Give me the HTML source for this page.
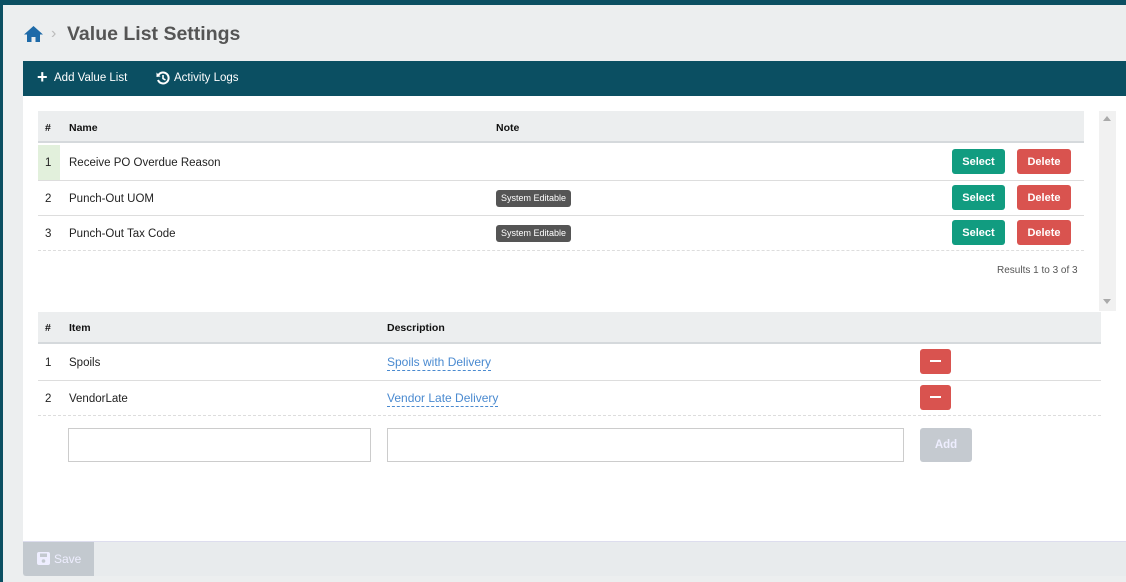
<!DOCTYPE html>
<html><head><style>
*{box-sizing:border-box;margin:0;padding:0}
body{width:1126px;height:582px;background:#eceeef;font-family:"Liberation Sans",sans-serif;position:relative;overflow:hidden;color:#222;font-size:12px}
.a{position:absolute}
.btn{position:absolute;border-radius:3px;color:#fff;font-weight:bold;font-size:11px;text-align:center;line-height:26px}
.sel{background:#119c80;width:53px;height:25px;left:952px}
.del{background:#d9534f;width:54px;height:25px;left:1017px}
.tag{position:absolute;left:496px;background:#555;color:#fff;font-size:9px;border-radius:3px;padding:0 5px;line-height:17px;height:17px}
.hd{font-weight:bold;font-size:10.5px;color:#111}
.link{color:#4a8ad0;border-bottom:1px dashed #4a8ad0;font-size:12px;line-height:15px}
.txt{font-size:11.5px;margin-top:2px}
</style></head><body>
<div class="a" style="left:0;top:0;width:1126px;height:5px;background:#0b4f62"></div>
<div class="a" style="left:0;top:0;width:3px;height:582px;background:#0b4f62"></div>
<svg class="a" style="left:23px;top:25px" width="21" height="18" viewBox="0 0 21 18"><path d="M10.5 1 L1 9.5 H4 V17 H8.5 V12 H12.5 V17 H17 V9.5 H20 Z" fill="#1e6aa8"/></svg>
<div class="a" style="left:51px;top:25px;color:#bbb;font-size:16px">›</div>
<div class="a" style="left:67px;top:23px;font-size:19.5px;font-weight:bold;color:#555">Value List Settings</div>
<div class="a" style="left:23px;top:61px;width:1103px;height:35px;background:#0b4f62;color:#fff;font-size:11.5px">
<span class="a" style="left:14px;top:7px;font-size:18px;font-weight:bold;line-height:18px">+</span>
<span class="a" style="left:31px;top:11px">Add Value List</span>
<svg class="a" style="left:133px;top:10px" width="14" height="14" viewBox="0 0 14 14"><path d="M2.5 4 A5.5 5.5 0 1 1 2 9" stroke="#fff" stroke-width="2" fill="none"/><path d="M0.5 1.5 L4.5 5.5 L0.5 6 Z" fill="#fff"/><path d="M7 4 V7.5 L9.5 9" stroke="#fff" stroke-width="1.6" fill="none"/></svg>
<span class="a" style="left:151px;top:11px">Activity Logs</span>
</div>
<div class="a" style="left:23px;top:96px;width:1103px;height:445px;background:#fff"></div>
<div class="a" style="left:38px;top:111px;width:1046px;height:32px;background:#eceeef;border-bottom:2px solid #d5d9dc"></div>
<div class="a hd" style="left:45px;top:122px">#</div>
<div class="a hd" style="left:69px;top:122px">Name</div>
<div class="a hd" style="left:496px;top:122px">Note</div>
<div class="a" style="left:38px;top:145px;width:22px;height:35px;background:#e2f0dc"></div>
<div class="a" style="left:38px;top:180px;width:1046px;border-top:1px solid #ddd"></div>
<div class="a" style="left:38px;top:215px;width:1046px;border-top:1px solid #ddd"></div>
<div class="a" style="left:38px;top:250px;width:1046px;border-top:1px dashed #ddd"></div>
<div class="a txt" style="left:45px;top:155px">1</div><div class="a txt" style="left:69px;top:155px">Receive PO Overdue Reason</div>
<div class="a txt" style="left:45px;top:191px">2</div><div class="a txt" style="left:69px;top:191px">Punch-Out UOM</div>
<div class="a txt" style="left:45px;top:226px">3</div><div class="a txt" style="left:69px;top:226px">Punch-Out Tax Code</div>
<div class="tag" style="top:190px">System Editable</div>
<div class="tag" style="top:225px">System Editable</div>
<div class="btn sel" style="top:149px">Select</div><div class="btn del" style="top:149px">Delete</div>
<div class="btn sel" style="top:185px">Select</div><div class="btn del" style="top:185px">Delete</div>
<div class="btn sel" style="top:220px">Select</div><div class="btn del" style="top:220px">Delete</div>
<div class="a" style="left:997px;top:265px;font-size:10px;color:#555">Results 1 to 3 of 3</div>
<div class="a" style="left:1099px;top:111px;width:17px;height:200px;background:#f1f1f1"></div>
<div class="a" style="left:1103px;top:116px;border:4px solid transparent;border-bottom:5px solid #aaa;border-top:0"></div>
<div class="a" style="left:1103px;top:299px;border:4px solid transparent;border-top:5px solid #aaa;border-bottom:0"></div>
<div class="a" style="left:38px;top:312px;width:1063px;height:32px;background:#eceeef;border-bottom:2px solid #d5d9dc"></div>
<div class="a hd" style="left:45px;top:322px">#</div>
<div class="a hd" style="left:69px;top:322px">Item</div>
<div class="a hd" style="left:387px;top:322px">Description</div>
<div class="a" style="left:38px;top:380px;width:1063px;border-top:1px solid #ddd"></div>
<div class="a" style="left:38px;top:415px;width:1063px;border-top:1px dashed #ddd"></div>
<div class="a txt" style="left:45px;top:355px">1</div><div class="a txt" style="left:69px;top:355px">Spoils</div>
<div class="a txt" style="left:45px;top:391px">2</div><div class="a txt" style="left:69px;top:391px">VendorLate</div>
<div class="a link" style="left:387px;top:355px">Spoils with Delivery</div>
<div class="a link" style="left:387px;top:391px">Vendor Late Delivery</div>
<div class="a" style="left:920px;top:349px;width:31px;height:25px;background:#d9534f;border-radius:3px"><div class="a" style="left:10px;top:11px;width:11px;height:2px;background:#fff"></div></div>
<div class="a" style="left:920px;top:385px;width:31px;height:25px;background:#d9534f;border-radius:3px"><div class="a" style="left:10px;top:11px;width:11px;height:2px;background:#fff"></div></div>
<div class="a" style="left:68px;top:428px;width:303px;height:34px;border:1px solid #ccc"></div>
<div class="a" style="left:387px;top:428px;width:517px;height:34px;border:1px solid #ccc"></div>
<div class="a" style="left:920px;top:428px;width:52px;height:34px;background:#c5cad0;border-radius:3px;color:#eef;font-weight:bold;font-size:11.5px;text-align:center;line-height:34px">Add</div>
<div class="a" style="left:23px;top:541px;width:1103px;height:35px;background:#e8ebed;border-top:1px solid #dde"></div>
<div class="a" style="left:23px;top:542px;width:71px;height:34px;background:#c3c9cf;border-radius:0 0 0 3px;color:#eef;font-size:12px">
<svg class="a" style="left:14px;top:10px" width="13" height="13" viewBox="0 0 13 13"><rect x="0" y="0" width="13" height="13" rx="2" fill="#eef"/><rect x="3" y="1.5" width="7" height="3.5" fill="#c3c9cf"/><circle cx="6.5" cy="9" r="1.8" fill="#c3c9cf"/></svg>
<span class="a" style="left:31px;top:10px">Save</span></div>
</body></html>
